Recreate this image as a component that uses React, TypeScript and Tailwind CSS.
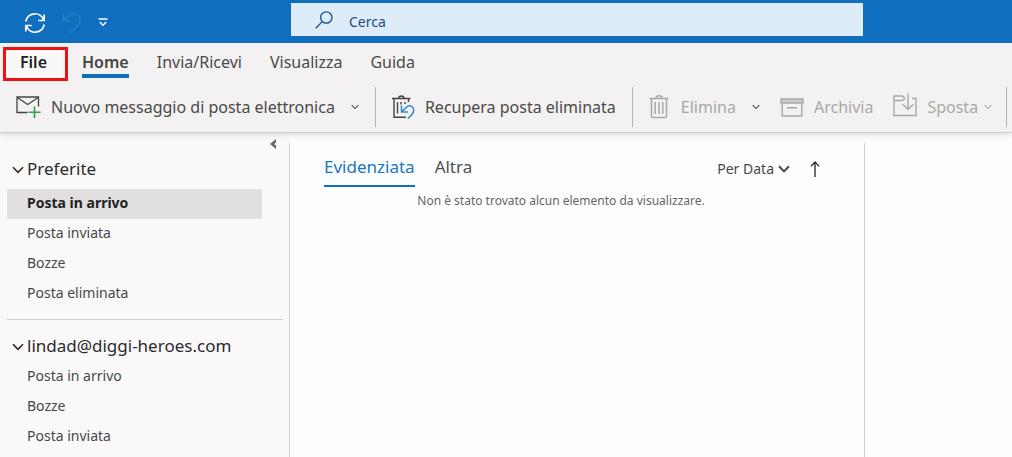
import type { ReactNode } from "react";

type IconProps = { className?: string };

function ChevronDown({ className = "h-1.5 w-2", strong = false }: IconProps & { strong?: boolean }) {
  return (
    <svg viewBox="0 0 12 8" className={`shrink-0 ${className}`} fill="none" stroke="currentColor" strokeWidth={strong ? 2 : 1.6} aria-hidden="true">
      <path d="M1 1.2 6 6.4 11 1.2" />
    </svg>
  );
}

function SyncIcon() {
  return (
    <svg viewBox="0 0 22 22" className="size-[22px]" fill="none" stroke="currentColor" strokeWidth="1.7" aria-hidden="true">
      <path d="M1.8 9.5A9.2 9.2 0 0 1 19.6 8M20.2 2.5v6h-6" />
      <path d="M20.2 12.5A9.2 9.2 0 0 1 2.4 14M1.8 19.5v-6h6" />
    </svg>
  );
}

function UndoIcon() {
  return (
    <svg viewBox="0 0 20 22" className="h-[22px] w-5" fill="none" stroke="currentColor" strokeWidth="1.4" aria-hidden="true">
      <path d="M1.5 1.5v7h7" />
      <path d="M1.8 8.2 6 4.2C9 1.5 13 1 16 3.6c3 2.7 3 6.6.2 9.4L8.5 20.5" />
    </svg>
  );
}

function CustomizeIcon() {
  return (
    <svg viewBox="0 0 10 9" className="h-[9px] w-2.5" fill="none" stroke="currentColor" strokeWidth="1.4" aria-hidden="true">
      <path d="M.5 1h9M1.8 4 5 7.3 8.2 4" />
    </svg>
  );
}

function SearchIcon() {
  return (
    <svg viewBox="0 0 18 18" className="size-[18px]" fill="none" stroke="currentColor" strokeWidth="1.3" aria-hidden="true">
      <circle cx="11.3" cy="6.5" r="5.7" />
      <path d="M7.2 10.6.7 17.2" />
    </svg>
  );
}

function NewMailIcon() {
  return (
    <svg viewBox="0 0 25 22" className="h-[22px] w-[25px]" fill="none" aria-hidden="true">
      <path d="M11.5 16.5H1V1h21.5v9.5M1 1.3l10.700 7.200L22.500 1.300" stroke="#444" strokeWidth="1.3" />
      <path d="M18.5 10.5V22M12.5 16.2h12" stroke="#379a50" strokeWidth="1.6" />
    </svg>
  );
}

function RecoverIcon() {
  return (
    <svg viewBox="0 0 23 24" className="h-6 w-[23px]" fill="none" aria-hidden="true">
      <path d="M0 3.5h18.500M6.500 3.300c0-3 5.500-3 5.500 0M2 3.500v18.700h12M16.500 3.500v3.500M5.500 7v11.500M9 7v2.500M13 7v2" stroke="#444" strokeWidth="1.4" />
      <path d="M9.500 10.500V17H16M9.800 16.700l4.700-4.500c2.300-2.200 5.500-1.500 6.600.8 1.300 2.700.3 5-1.600 7L15.800 23.500" stroke="#3489cc" strokeWidth="1.5" />
    </svg>
  );
}

function TrashIcon() {
  return (
    <svg viewBox="0 0 20 24" className="h-6 w-5" fill="none" stroke="currentColor" strokeWidth="1.5" aria-hidden="true">
      <path d="M.5 3.500h19M7 3.300c0-3.300 6-3.300 6 0M2.500 3.500v17.700q0 1.300 1.300 1.300h12.400q1.300 0 1.300-1.300V3.500M6.200 7v12M10 7v12M13.800 7v12" />
    </svg>
  );
}

function ArchiveIcon() {
  return (
    <svg viewBox="0 0 24 19" className="h-[19px] w-6" fill="none" stroke="currentColor" strokeWidth="1.4" aria-hidden="true">
      <path d="M1 1h22v4H1z" fill="#cecdcd" />
      <path d="M2.200 5v13h19.600V5M7 9.800h10" />
    </svg>
  );
}

function MoveIcon() {
  return (
    <svg viewBox="0 0 24 24" className="mb-1 size-6" fill="none" stroke="currentColor" strokeWidth="1.4" aria-hidden="true">
      <path d="M12 5.500 9.500 3H1v19.500h22V5.500h-4M12 5.500 9.500 7.500H1" />
      <path d="M15 .5v15.500M9.800 11.300 15 16.500l5.200-5.200" />
    </svg>
  );
}

function Tab({ children }: { children: ReactNode }) {
  return <button className="text-base leading-6 text-[#4a4a4a]">{children}</button>;
}

function Divider() {
  return <div className="h-10 w-px shrink-0 bg-[#b5b3b3]" />;
}

function Folder({ name, selected = false }: { name: string; selected?: boolean }) {
  return (
    <li>
      <a
        href="#"
        className={
          selected
            ? "block bg-[#e1dfe0] pb-0.5 pl-5 text-sm leading-7 font-bold text-[#222]"
            : "block pb-0.5 pl-5 text-sm leading-7 text-[#484848]"
        }
      >
        {name}
      </a>
    </li>
  );
}

function FolderGroup({ title, children }: { title: string; children: ReactNode }) {
  return (
    <section>
      <button className="flex items-center gap-0.5 pl-1 text-[17px] leading-6 text-[#2b2b2b]">
        <ChevronDown className="mt-0.5 h-2 w-3.5" />
        {title}
      </button>
      {children}
    </section>
  );
}

export default function App() {
  return (
    <div className="flex min-h-screen flex-col bg-[#fdfdfd] font-['Noto_Sans','Open_Sans',sans-serif]">
      <header className="flex h-[43px] shrink-0 items-center bg-[#106ebe] text-white">
        <div className="flex w-[291px] shrink-0 items-center gap-4 pt-0.5 pl-6">
          <button aria-label="Invia/Ricevi tutto"><SyncIcon /></button>
          <button aria-label="Annulla" className="text-[#2b7ec8]"><UndoIcon /></button>
          <button aria-label="Personalizza"><CustomizeIcon /></button>
        </div>
        <label className="mb-1 flex h-[33px] w-[572px] items-center gap-4 bg-[#deecf9] pl-6 text-[#174e86]">
          <SearchIcon />
          <input aria-label="Cerca" placeholder="Cerca" className="min-w-0 flex-1 bg-transparent pt-1 text-sm outline-none placeholder:text-[#174e86]" />
        </label>
      </header>

      <div className="z-10 shrink-0 border-b border-[#cfcdcd] bg-[#f3f1f1] shadow-[0_2px_6px_rgba(0,0,0,0.12)]">
        <nav className="flex items-start pt-1 pl-[3px]">
          <button className="h-[34px] w-[65px] border-3 border-[#ee1111] bg-[#faf8f7] pr-1 pb-1 text-base leading-6 font-semibold text-[#222]">File</button>
          <div className="flex items-start gap-7 pt-[3px] pl-3.5">
            <button className="border-b-4 border-[#106ebe] text-base leading-6 font-semibold text-[#444]">Home</button>
            <Tab>Invia/Ricevi</Tab>
            <Tab>Visualizza</Tab>
            <Tab>Guida</Tab>
          </div>
        </nav>
        <div className="flex h-[51px] items-start overflow-hidden pt-1.5 pl-4 text-base whitespace-nowrap text-[#4a4a4a]">
          <div className="flex items-center">
            <button className="flex items-center gap-2.5"><NewMailIcon />Nuovo messaggio di posta elettronica</button>
            <button aria-label="Altre opzioni" className="px-4"><ChevronDown /></button>
            <Divider />
            <button className="flex items-center gap-2.5 px-4"><RecoverIcon />Recupera posta eliminata</button>
            <Divider />
            <button className="flex items-center gap-3 pl-4 text-[#a9a8a8]"><TrashIcon />Elimina</button>
            <button aria-label="Opzioni di eliminazione" className="pr-3 pl-4"><ChevronDown /></button>
            <button className="flex items-center gap-2.5 pl-2 text-[#a9a8a8]"><ArchiveIcon />Archivia</button>
            <button className="flex items-center gap-2.5 pl-5 text-[#a9a8a8]"><MoveIcon /><span className="flex items-center gap-1.5">Sposta<ChevronDown /></span></button>
            <div className="pl-3.5"><Divider /></div>
          </div>
        </div>
      </div>

      <div className="flex flex-1">
        <aside className="flex w-[289px] shrink-0 flex-col bg-[#faf8f9] pl-[7px]">
          <button aria-label="Comprimi" className="mt-1.5 mr-3 self-end text-[#666]">
            <svg viewBox="0 0 8 10" className="h-2.5 w-2" aria-hidden="true"><path d="M7 0 1 5l6 5V6.500L5 5l2-1.500z" fill="currentColor" /></svg>
          </button>
          <div className="flex flex-col gap-2.5 pt-2">
            <FolderGroup title="Preferite">
              <ul className="mt-2 mr-[27px]">
                <Folder name="Posta in arrivo" selected />
                <Folder name="Posta inviata" />
                <Folder name="Bozze" />
                <Folder name="Posta eliminata" />
              </ul>
            </FolderGroup>
            <hr className="mr-1.5 mb-1 border-[#cfcdcd]" />
            <FolderGroup title="lindad@diggi-heroes.com">
              <ul className="mt-1 mr-[27px]">
                <Folder name="Posta in arrivo" />
                <Folder name="Bozze" />
                <Folder name="Posta inviata" />
              </ul>
            </FolderGroup>
          </div>
        </aside>
        <main className="mt-2.5 w-[576px] border-x border-[#cfcdcd] pt-3">
          <div className="flex items-start pr-11 pl-[34px]">
            <button className="border-b-2 border-[#106ebe] pb-1.5 text-[17px] leading-6 text-[#1a76bd]">Evidenziata</button>
            <button className="ml-5 text-[17px] leading-6 text-[#505050]">Altra</button>
            <button className="ml-auto flex items-center gap-1 text-sm leading-7 text-[#484848]">Per Data<ChevronDown className="h-2 w-3" strong /></button>
            <button aria-label="Inverti ordinamento" className="ml-5 pt-1.5 text-[#333]">
              <svg viewBox="0 0 10 16" className="h-4 w-2.5" fill="none" stroke="currentColor" strokeWidth="1.4" aria-hidden="true"><path d="M5 16V1M1 5.200 5 1l4 4.200" /></svg>
            </button>
          </div>
          <p className="pt-1 pr-8 text-center text-xs leading-5 text-[#666]">Non è stato trovato alcun elemento da visualizzare.</p>
        </main>
      </div>
    </div>
  );
}
